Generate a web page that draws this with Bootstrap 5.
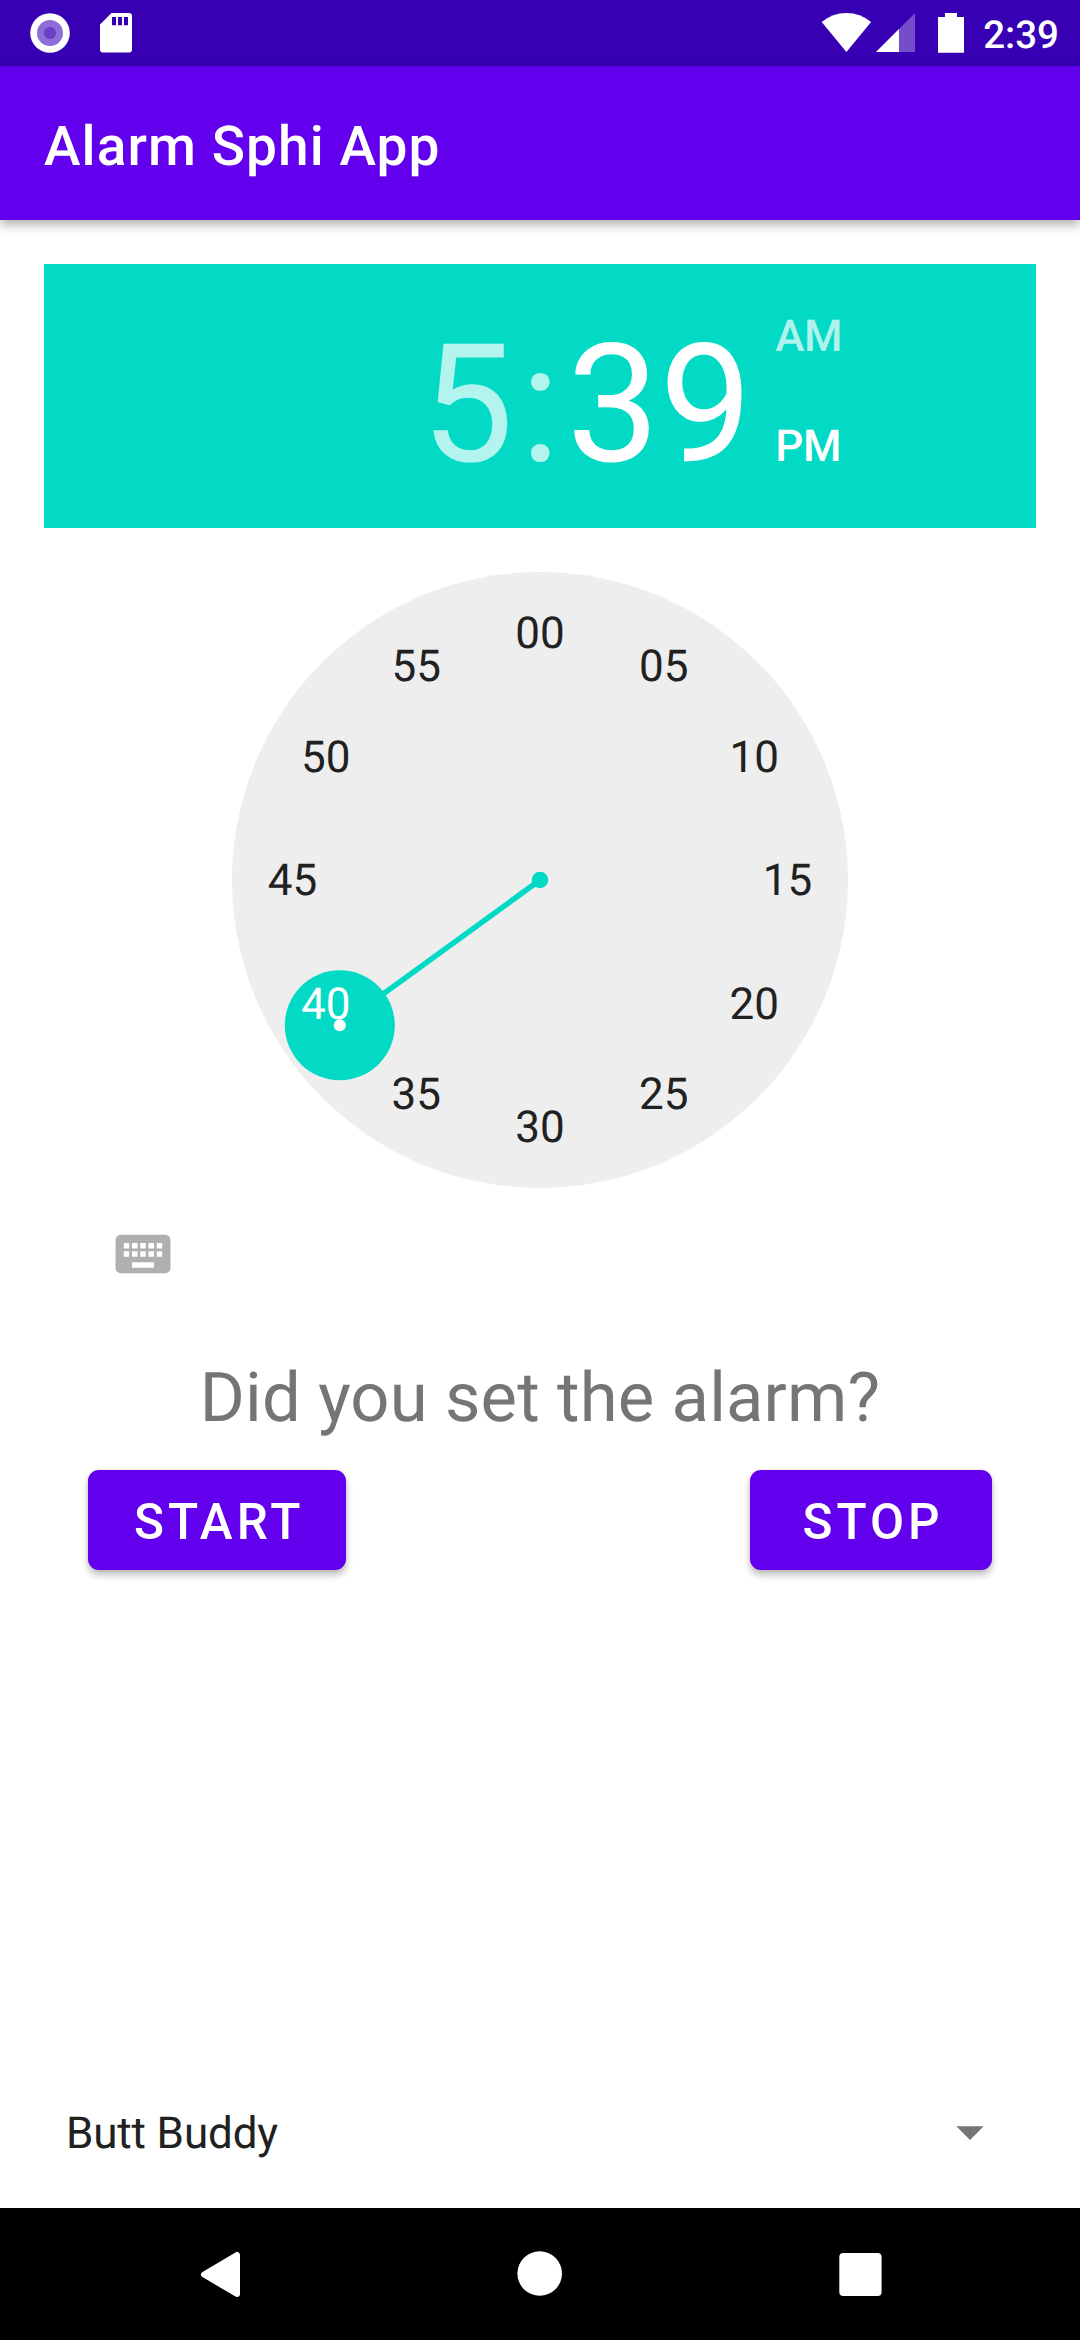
<!DOCTYPE html>
<html lang="en">
<head>
<meta charset="utf-8">
<meta name="viewport" content="width=device-width, initial-scale=1">
<title>Alarm Sphi App</title>
<link href="https://cdn.jsdelivr.net/npm/bootstrap@5.3.0/dist/css/bootstrap.min.css" rel="stylesheet">
<style>
  :root { --purple: #6200ee; --purple-dark: #3700b3; --teal: #03dac5; }
  body { font-family: Roboto, sans-serif; width: 1080px; height: 2340px; overflow: hidden; text-rendering: geometricPrecision; }
  svg { display: block; flex: none; }
  .status-bar { height: 66px; background: var(--purple-dark); }
  .status-bar .clock-text { font-size: 38.5px; font-weight: 500; line-height: 46px; padding: 5px 21px 0 16px; }
  .app-bar { height: 154px; padding: 8px 44px 0; background: var(--purple); box-shadow: 0 5px 10px rgba(0,0,0,.3); z-index: 1; }
  .app-title { font-size: 55px; font-weight: 500; line-height: 64px; letter-spacing: 1.08px; }
  .screen { padding: 44px 44px 0; }
  .time-header { height: 264px; background: var(--teal); padding-left: 377px; }
  .digits { font-size: 165px; line-height: 193px; margin-top: 45px; }
  .digits .sep { width: 53px; text-align: center; }
  .dim { color: rgba(255,255,255,.7); }
  .ampm { font-size: 44px; font-weight: 500; line-height: 52px; letter-spacing: -.3px; margin: 46px 0 0 23px; gap: 58px; }
  .dial { margin-top: 44px; }
  .dial text { font-size: 44px; fill: #212121; text-anchor: middle; }
  .dial .picked { fill: #fff; }
  .kbd-toggle { margin: 33px 0 0 66px; }
  .question { font-size: 68.75px; line-height: 80px; letter-spacing: .16px; color: #757575; margin-top: 71px; }
  .actions { padding: 0 44px; margin-top: 32px; }
  .btn-alarm { --bs-btn-color: #fff; --bs-btn-bg: var(--purple); --bs-btn-hover-color: #fff; --bs-btn-hover-bg: var(--purple); --bs-btn-border-width: 0; --bs-btn-border-radius: 11px;
    height: 100px; min-width: 242px; padding: 4px 42px 0 46px; font-size: 49.5px; font-weight: 500; line-height: 58px; letter-spacing: 4px; box-shadow: 0 5px 7px rgba(0,0,0,.26), 0 0 3px rgba(0,0,0,.12); }
  .spinner-row { font-size: 44px; line-height: 52px; letter-spacing: -.15px; color: #212121; padding: 0 52px 49px 22px; }
  .nav-keys { height: 132px; background: #000; }
</style>
</head>
<body class="d-flex flex-column bg-white">
<header class="status-bar d-flex align-items-center justify-content-between text-white flex-shrink-0">
  <svg width="140" height="66" fill="#fff">
    <circle cx="50" cy="33" r="19.8"/><circle cx="50" cy="33" r="13" fill="#8f6dd7"/><circle cx="50" cy="33" r="6.1" fill="#6b3fc8"/>
    <path fill-rule="evenodd" d="M111.5 13H129a3 3 0 0 1 3 3V49.500a3 3 0 0 1-3 3H103a3 3 0 0 1-3-3V24.500ZM112 17v8.300h4V17ZM118 17v8.300h4V17ZM124 17v8.300h4V17Z"/>
  </svg>
  <div class="d-flex align-items-center">
    <svg width="146" height="66" viewBox="820 0 146 66" fill="#fff">
      <path d="M845.400 52 820.700 22Q831.500 13 845.400 13T870.100 22Z"/>
      <path d="M875 52 914 13V52Z" opacity=".3"/><path d="M875 52 898 29V52Z"/>
      <path d="M944 13h12v4h7v35.700h-26V17h7Z"/>
    </svg>
    <span class="clock-text">2:39</span>
  </div>
</header>
<nav class="app-bar d-flex align-items-center flex-shrink-0 text-white position-relative">
  <span class="app-title">Alarm Sphi App</span>
</nav>
<main class="screen flex-grow-1 d-flex flex-column">
  <section class="time-header d-flex align-items-start text-white flex-shrink-0">
    <div class="digits d-flex"><span class="dim">5</span><span class="sep dim">:</span><span>39</span></div>
    <div class="ampm d-flex flex-column"><span class="am dim">AM</span><span>PM</span></div>
  </section>
  <svg class="dial align-self-center" width="616" height="616" viewBox="232 572 616 616">
    <circle cx="540" cy="880" r="308" fill="#eee"/>
    <g fill="#03dac5">
      <path d="M540 880 339.800 1025.500" stroke="#03dac5" stroke-width="5.500"/>
      <circle cx="540" cy="880" r="8.250"/><circle cx="339.800" cy="1025.300" r="55"/>
    </g>
    <circle cx="339.800" cy="1025.300" r="6" fill="#fff"/>
    <text x="540" y="648">00</text><text x="663.800" y="681">05</text><text x="754.300" y="772">10</text>
    <text x="787.500" y="895">15</text><text x="754.300" y="1019">20</text><text x="663.800" y="1109">25</text>
    <text x="540" y="1142">30</text><text x="416.300" y="1109">35</text><text class="picked" x="325.700" y="1019">40</text>
    <text x="292.500" y="895">45</text><text x="325.700" y="772">50</text><text x="416.300" y="681">55</text>
  </svg>
  <svg class="kbd-toggle" width="66" height="66" viewBox="0 0 24 24" fill="#afafaf"><path d="M20 5H4c-1.100 0-1.990.9-1.990 2L2 17c0 1.100.9 2 2 2h16c1.100 0 2-.9 2-2V7c0-1.100-.9-2-2-2zm-9 3h2v2h-2V8zm0 3h2v2h-2v-2zM8 8h2v2H8V8zm0 3h2v2H8v-2zm-1 2H5v-2h2v2zm0-3H5V8h2v2zm9 7H8v-2h8v2zm0-4h-2v-2h2v2zm0-3h-2V8h2v2zm3 3h-2v-2h2v2zm0-3h-2V8h2v2z"/></svg>
  <div class="question text-center">Did you set the alarm?</div>
  <div class="actions d-flex justify-content-between">
    <button type="button" class="btn btn-alarm">START</button>
    <button type="button" class="btn btn-alarm">STOP</button>
  </div>
  <div class="spinner-row d-flex align-items-center justify-content-between mt-auto">
    <span>Butt Buddy</span>
    <svg width="28" height="14" viewBox="0 0 28 14" fill="#757575"><path d="M.3.300H27.700L14 14Z"/></svg>
  </div>
</main>
<footer class="nav-keys flex-shrink-0">
  <svg width="1080" height="132" viewBox="0 2208 1080 132" fill="#fff">
    <path d="M237 2255V2294L204 2274.500Z" stroke="#fff" stroke-width="6" stroke-linejoin="round"/>
    <circle cx="539.700" cy="2273.500" r="22.300"/>
    <rect x="839.300" y="2253" width="42.300" height="43" rx="4"/>
  </svg>
</footer>
<script src="https://cdn.jsdelivr.net/npm/bootstrap@5.3.0/dist/js/bootstrap.bundle.min.js"></script>
</body>
</html>
